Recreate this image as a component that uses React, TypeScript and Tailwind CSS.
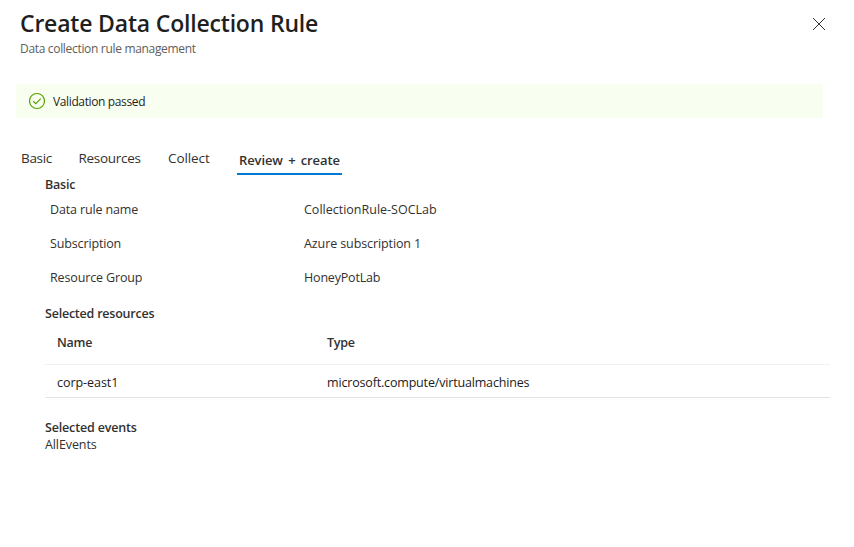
const details = [
  { label: 'Data rule name', value: 'CollectionRule-SOCLab', spacing: 'tracking-[0px]' },
  { label: 'Subscription', value: 'Azure subscription 1', spacing: 'tracking-[-0.1px]' },
  { label: 'Resource Group', value: 'HoneyPotLab', spacing: 'tracking-[-0.18px]' },
];

function CheckIcon() {
  return (
    <svg width="18" height="18" viewBox="0 0 18 18" fill="none" stroke="#57a300" strokeWidth="1.2">
      <circle cx="9" cy="9" r="7.5" />
      <path d="M5.2 9.3l2.6 2.4 4.9-5" />
    </svg>
  );
}

function CloseIcon() {
  return (
    <svg width="14" height="14" viewBox="0 0 14 14" fill="none" stroke="#323130" strokeWidth="1">
      <path d="M1 1l12 12M13 1L1 13" />
    </svg>
  );
}

export default function App() {
  return (
    <div className="h-[547px] w-[854px] overflow-hidden bg-white font-['Open_Sans','Noto_Sans',sans-serif] text-[12.5px] leading-[17px] tracking-[-0.14px] text-[#323130]">
      <header className="flex h-[84px] justify-between pl-5 pr-7">
        <div>
          <h1 className="mt-[7px] text-[23px] font-semibold leading-8 tracking-[-0.19px] text-[#1f1f1f]">
            Create Data Collection Rule
          </h1>
          <p className="mt-0.5 text-[12px] leading-4 tracking-[-0.32px] text-[#605e5c]">Data collection rule management</p>
        </div>
        <button className="mt-[17px] h-[14px] w-[14px]" aria-label="Close">
          <CloseIcon />
        </button>
      </header>

      <div className="ml-4 flex h-[34px] w-[807px] items-center bg-[#f8fff0] pl-3">
        <CheckIcon />
        <span className="ml-[7px] pt-px text-[12px] tracking-[-0.37px] text-[#1f1f1f]">Validation passed</span>
      </div>

      <nav className="ml-[21px] mt-[30px] flex h-[27px] text-[13.5px] leading-5 tracking-[-0.3px]">
        <span className="w-[57.5px]">Basic</span>
        <span className="w-[89.5px]">Resources</span>
        <span className="w-[69px] tracking-[-0.1px]">Collect</span>
        <span className="w-[105px] border-b-2 border-[#0078d4] pl-[2px] pt-[2px] text-[13px] font-semibold tracking-[-0.1px] [word-spacing:2px]">
          Review + create
        </span>
      </nav>

      <main className="ml-[45px] w-[785px]">
        <h2 className="pt-px font-semibold tracking-[-0.22px]">Basic</h2>
        <dl className="-mt-px pl-[5px]">
          {details.map((d) => (
            <div key={d.label} className="flex h-[34px] items-center">
              <dt className="w-[254px]">{d.label}</dt>
              <dd className={d.spacing}>{d.value}</dd>
            </div>
          ))}
        </dl>
        <h2 className="mt-[11px] font-semibold tracking-[-0.22px]">Selected resources</h2>
        <div className="flex h-[43px] border-b border-[#f0f0f0] pl-3 pt-3 font-semibold tracking-[-0.22px]">
          <span className="w-[270px]">Name</span>
          <span>Type</span>
        </div>
        <div className="flex h-[33px] items-center border-b border-[#e4e4e4] pl-3 pt-[2px] text-[#1b1b1b]">
          <span className="w-[270px] tracking-[-0.05px]">corp-east1</span>
          <span className="tracking-[-0.17px]">microsoft.compute/virtualmachines</span>
        </div>
        <h2 className="mt-[21px] font-semibold tracking-[-0.16px]">Selected events</h2>
        <p className="tracking-[-0.1px]">AllEvents</p>
      </main>
    </div>
  );
}
